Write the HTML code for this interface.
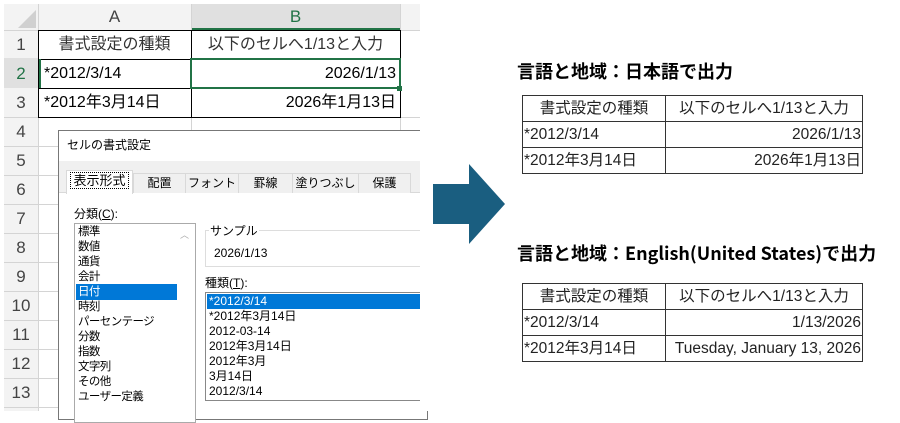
<!DOCTYPE html>
<html><head><meta charset="utf-8"><style>
*{margin:0;padding:0;box-sizing:border-box}
body{width:900px;height:411px;background:#fff;position:relative;overflow:hidden;font-family:"Liberation Sans","Noto Sans CJK JP",sans-serif;color:#000}
.a{position:absolute;white-space:nowrap}
.hl{position:absolute;height:1px;background:#d4d4d4}
.vl{position:absolute;width:1px;background:#d4d4d4}
.rh{position:absolute;left:4px;width:34px;text-align:center;font-size:17px;color:#444;line-height:29px}
.cell{position:absolute;font-size:16px;line-height:28px;padding:0 4px}
.tab{position:absolute;top:173px;height:20px;border:1px solid #d9d9d9;border-bottom:none;background:#f0f0f0;font-size:12px;text-align:center;line-height:19px}
.li{position:absolute;font-size:12px;line-height:15px}
.lc{font-size:11.5px;letter-spacing:-0.6px}
table{position:absolute;border-collapse:collapse;font-size:15.5px;color:#222}
td{border:1px solid #333;height:26px;padding:0 1px;line-height:24px}
.t{position:absolute;left:517px;font-size:18px;font-weight:bold;font-family:"Noto Sans CJK JP","Liberation Sans",sans-serif}
</style></head><body>
<div class="a" style="left:4px;top:4px;width:416px;height:26px;background:#f3f3f3"></div>
<div class="a" style="left:191px;top:4px;width:209px;height:26px;background:#e0e0e0;border-bottom:2px solid #217346"></div>
<div class="a" style="left:4px;top:4px;width:34px;height:407px;background:#f3f3f3"></div>
<div class="a" style="left:4px;top:58px;width:34px;height:30px;background:#e0e0e0"></div>
<svg class="a" style="left:18px;top:10px" width="18" height="18"><path d="M18 0V18H0Z" fill="#d0d0d0"/></svg>
<div class="vl" style="left:38px;top:4px;height:407px"></div>
<div class="vl" style="left:191px;top:4px;height:407px"></div>
<div class="vl" style="left:400px;top:4px;height:407px"></div>
<div class="hl" style="left:4px;top:30px;width:416px"></div>
<div class="hl" style="left:4px;top:117px;width:416px"></div>
<div class="hl" style="left:4px;top:146px;width:416px"></div>
<div class="hl" style="left:4px;top:175px;width:54px"></div>
<div class="hl" style="left:4px;top:204px;width:54px"></div>
<div class="hl" style="left:4px;top:233px;width:54px"></div>
<div class="hl" style="left:4px;top:262px;width:54px"></div>
<div class="hl" style="left:4px;top:291px;width:54px"></div>
<div class="hl" style="left:4px;top:320px;width:54px"></div>
<div class="hl" style="left:4px;top:349px;width:54px"></div>
<div class="hl" style="left:4px;top:378px;width:54px"></div>
<div class="hl" style="left:4px;top:407px;width:54px"></div>
<div class="a" style="left:38px;top:4px;width:153px;text-align:center;font-size:17px;color:#444;line-height:26px">A</div>
<div class="a" style="left:191px;top:4px;width:209px;text-align:center;font-size:17px;color:#217346;line-height:26px">B</div>
<div class="rh" style="top:30px">1</div><div class="rh" style="top:59px;color:#217346">2</div><div class="rh" style="top:88px">3</div>
<div class="rh" style="top:117px">4</div><div class="rh" style="top:146px">5</div><div class="rh" style="top:175px">6</div>
<div class="rh" style="top:204px">7</div><div class="rh" style="top:233px">8</div><div class="rh" style="top:262px">9</div>
<div class="rh" style="top:291px">10</div><div class="rh" style="top:320px">11</div><div class="rh" style="top:349px">12</div>
<div class="rh" style="top:378px">13</div>
<div class="a" style="left:38px;top:30px;width:363px;height:88px;border:1px solid #000"></div>
<div class="a" style="left:191px;top:30px;width:1px;height:88px;background:#000"></div>
<div class="a" style="left:38px;top:59px;width:363px;height:1px;background:#000"></div>
<div class="a" style="left:38px;top:88px;width:363px;height:1px;background:#000"></div>
<div class="a" style="left:39px;top:59px;width:2px;height:29px;background:#217346"></div>
<div class="a" style="left:190px;top:58px;width:211px;height:31px;border:2px solid #217346"></div>
<div class="a" style="left:397px;top:86px;width:5px;height:5px;background:#217346"></div>
<div class="cell" style="left:38px;top:31px;width:153px;text-align:center;color:#333">書式設定の種類</div>
<div class="cell" style="left:191px;top:31px;width:209px;text-align:center;color:#333">以下のセルへ1/13と入力</div>
<div class="cell" style="left:40px;top:60px">*2012/3/14</div>
<div class="cell" style="left:191px;top:60px;width:209px;text-align:right">2026/1/13</div>
<div class="cell" style="left:40px;top:89px">*2012年3月14日</div>
<div class="cell" style="left:191px;top:89px;width:209px;text-align:right">2026年1月13日</div>
<div class="a" style="left:58px;top:130px;width:370px;height:290px;background:#fff;border:1px solid #777"></div>
<div class="a" style="left:59px;top:161px;width:362px;height:32px;background:#f0f0f0;border-bottom:1px solid #d9d9d9"></div>
<div class="a" style="left:67px;top:138px;font-size:12px;line-height:15px">セルの書式設定</div>
<div class="tab" style="left:133px;width:53px">配置</div>
<div class="tab" style="left:185px;width:54px">フォント</div>
<div class="tab" style="left:238px;width:55px">罫線</div>
<div class="tab" style="left:292px;width:67px">塗りつぶし</div>
<div class="tab" style="left:358px;width:53px">保護</div>
<div class="tab" style="left:66px;top:170px;width:67px;height:24px;background:#fff;font-size:13px"><span style="outline:1px dotted #000;padding:0 2px">表示形式</span></div>
<div class="a" style="left:74px;top:205px;font-size:12px">分類(<u>C</u>):</div>
<div class="a" style="left:74px;top:223px;width:122px;height:200px;border:1px solid #aaa;background:#fff"></div>
<div class="a" style="left:180px;top:228px;font-size:9px;color:#aaa">︿</div>
<div class="a" style="left:76px;top:284px;width:101px;height:16px;background:#0078d7"></div>
<div class="li lc" style="left:78px;top:225px">標準</div><div class="li lc" style="left:78px;top:240px">数値</div>
<div class="li lc" style="left:78px;top:255px">通貨</div><div class="li lc" style="left:78px;top:270px">会計</div>
<div class="li lc" style="left:78px;top:285px;color:#fff">日付</div><div class="li lc" style="left:78px;top:300px">時刻</div>
<div class="li lc" style="left:78px;top:315px">パーセンテージ</div><div class="li lc" style="left:78px;top:330px">分数</div>
<div class="li lc" style="left:78px;top:345px">指数</div><div class="li lc" style="left:78px;top:360px">文字列</div>
<div class="li lc" style="left:78px;top:375px">その他</div><div class="li lc" style="left:78px;top:390px">ユーザー定義</div>
<div class="a" style="left:205px;top:230px;width:220px;height:37px;border:1px solid #ddd;border-right:none"></div>
<div class="a" style="left:209px;top:222px;background:#fff;font-size:12px;padding:0 1px">サンプル</div>
<div class="a" style="left:214px;top:246px;font-size:12px">2026/1/13</div>
<div class="a" style="left:205px;top:274px;font-size:12px">種類(<u>T</u>):</div>
<div class="a" style="left:205px;top:292px;width:220px;height:109px;border:1px solid #888;border-right:none"></div>
<div class="a" style="left:207px;top:294px;width:215px;height:15px;background:#0078d7"></div>
<div class="li" style="left:209px;top:294px;color:#fff">*2012/3/14</div>
<div class="li" style="left:209px;top:309px">*2012年3月14日</div>
<div class="li" style="left:209px;top:324px">2012-03-14</div>
<div class="li" style="left:209px;top:339px">2012年3月14日</div>
<div class="li" style="left:209px;top:354px">2012年3月</div>
<div class="li" style="left:209px;top:369px">3月14日</div>
<div class="li" style="left:209px;top:384px">2012/3/14</div>
<div class="a" style="left:420px;top:0;width:12px;height:411px;background:#fff"></div>
<svg class="a" style="left:432px;top:163px" width="75" height="83"><path d="M1 21H37V1L73 41L37 81V61H1Z" fill="#1a5e80"/></svg>
<div class="t" style="top:58px">言語と地域：日本語で出力</div>
<table style="left:522px;top:95px;width:341px">
<tr><td style="width:143px;text-align:center">書式設定の種類</td><td style="text-align:center">以下のセルへ1/13と入力</td></tr>
<tr><td>*2012/3/14</td><td style="text-align:right">2026/1/13</td></tr>
<tr><td>*2012年3月14日</td><td style="text-align:right">2026年1月13日</td></tr>
</table>
<div class="t" style="top:240px">言語と地域：English(United States)で出力</div>
<table style="left:522px;top:283px;width:341px">
<tr><td style="width:143px;text-align:center">書式設定の種類</td><td style="text-align:center">以下のセルへ1/13と入力</td></tr>
<tr><td>*2012/3/14</td><td style="text-align:right">1/13/2026</td></tr>
<tr><td>*2012年3月14日</td><td style="text-align:right">Tuesday, January 13, 2026</td></tr>
</table>
</body></html>
